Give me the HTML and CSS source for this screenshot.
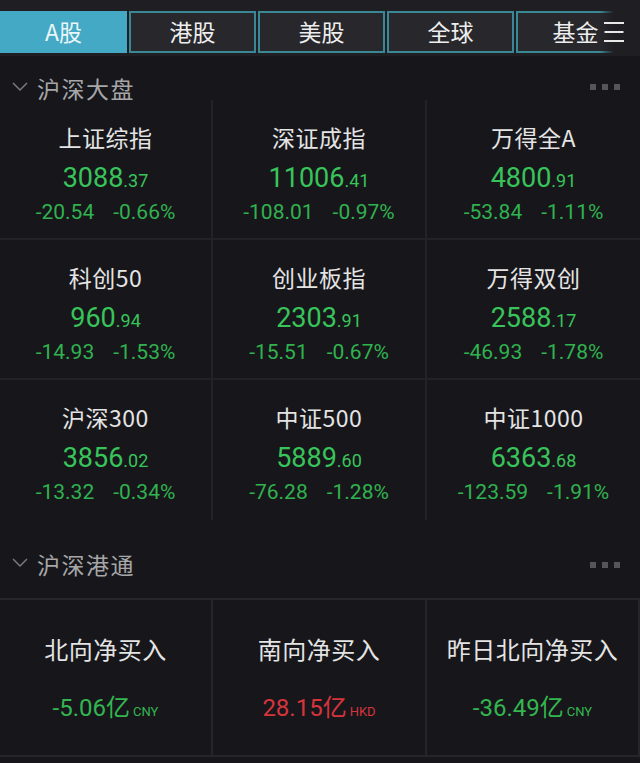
FILE: index.html
```html
<!DOCTYPE html>
<html lang="zh">
<head>
<meta charset="utf-8">
<link rel="stylesheet" href="styles.css">
</head>
<body>
<div class="topbar">
  <div class="tabs">
    <div class="tab active">A股</div>
    <div class="tab">港股</div>
    <div class="tab">美股</div>
    <div class="tab">全球</div>
    <div class="tab">基金</div>
  </div>
  <div class="fade">
    <svg class="menu" width="22" height="22" viewBox="0 0 22 22"><path d="M1 3h20M1.5 12h19M1 21h20" stroke="#e8e8e8" stroke-width="2" fill="none"/></svg>
  </div>
</div>

<div class="section-head">
  <svg class="chev" width="16" height="10" viewBox="0 0 16 10"><path d="M1 1l7 7 7-7" stroke="#7a7a7e" stroke-width="1.5" fill="none"/></svg>
  <span class="sec-title">沪深大盘</span>
  <span class="dots"><i></i><i></i><i></i></span>
</div>

<div class="grid">
  <div class="cell"><div class="name">上证综指</div><div class="num">3088<small>.37</small></div><div class="chg"><span>-20.54</span><span>-0.66%</span></div></div>
  <div class="cell"><div class="name">深证成指</div><div class="num">11006<small>.41</small></div><div class="chg"><span>-108.01</span><span>-0.97%</span></div></div>
  <div class="cell"><div class="name">万得全A</div><div class="num">4800<small>.91</small></div><div class="chg"><span>-53.84</span><span>-1.11%</span></div></div>
  <div class="cell"><div class="name">科创50</div><div class="num">960<small>.94</small></div><div class="chg"><span>-14.93</span><span>-1.53%</span></div></div>
  <div class="cell"><div class="name">创业板指</div><div class="num">2303<small>.91</small></div><div class="chg"><span>-15.51</span><span>-0.67%</span></div></div>
  <div class="cell"><div class="name">万得双创</div><div class="num">2588<small>.17</small></div><div class="chg"><span>-46.93</span><span>-1.78%</span></div></div>
  <div class="cell"><div class="name">沪深300</div><div class="num">3856<small>.02</small></div><div class="chg"><span>-13.32</span><span>-0.34%</span></div></div>
  <div class="cell"><div class="name">中证500</div><div class="num">5889<small>.60</small></div><div class="chg"><span>-76.28</span><span>-1.28%</span></div></div>
  <div class="cell"><div class="name">中证1000</div><div class="num">6363<small>.68</small></div><div class="chg"><span>-123.59</span><span>-1.91%</span></div></div>
</div>

<div class="section-head second">
  <svg class="chev" width="16" height="10" viewBox="0 0 16 10"><path d="M1 1l7 7 7-7" stroke="#7a7a7e" stroke-width="1.5" fill="none"/></svg>
  <span class="sec-title">沪深港通</span>
  <span class="dots"><i></i><i></i><i></i></span>
</div>

<div class="flow">
  <div class="fcell"><div class="name">北向净买入</div><div class="fval green">-5.06亿<small>CNY</small></div></div>
  <div class="fcell"><div class="name">南向净买入</div><div class="fval red">28.15亿<small>HKD</small></div></div>
  <div class="fcell"><div class="name">昨日北向净买入</div><div class="fval green">-36.49亿<small>CNY</small></div></div>
</div>
</body>
</html>
```

FILE: styles.css
```css
html, body {
  margin: 0;
  padding: 0;
}
body {
  width: 640px;
  height: 763px;
  overflow: hidden;
  background: #17171b;
  font-family: Roboto, "Noto Sans CJK SC", sans-serif;
  color: #e6e6e6;
}
.topbar {
  position: relative;
  height: 56px;
  background: #1f1f23;
  overflow: hidden;
}
.tabs {
  display: flex;
  gap: 2px;
  padding-top: 11px;
  width: 800px;
}
.tab {
  flex: 0 0 127px;
  box-sizing: border-box;
  height: 42px;
  border: 2px solid #3a8896;
  background: #28282c;
  color: #eeeeee;
  font-family: "Noto Sans CJK SC", sans-serif;
  font-size: 23px;
  line-height: 37px;
  text-align: center;
}
.tab.active {
  background: #44a9c4;
  border-color: #44a9c4;
  color: #eaf6fa;
}
.tab:last-child {
  text-indent: -8px;
}
.fade {
  position: absolute;
  right: 0;
  top: 0;
  width: 40px;
  height: 56px;
  background: linear-gradient(to right, rgba(31,31,35,0) 0%, #1f1f23 35%);
  padding: 20px 0 0 3px;
  box-sizing: border-box;
}
.menu {
  display: block;
}
.section-head {
  display: flex;
  align-items: center;
  height: 44px;
  padding: 20px 0 0 12px;
  box-sizing: border-box;
}
.section-head.second {
  height: 78px;
  padding-top: 30px;
  padding-bottom: 20px;
}
.chev {
  display: block;
  margin-right: 9px;
  margin-top: -2px;
}
.sec-title {
  font-family: "Noto Sans CJK SC", sans-serif;
  font-size: 23px;
  color: #a6a6a8;
  line-height: 24px;
  letter-spacing: 1.5px;
  flex: 1;
}
.dots {
  display: flex;
  gap: 6px;
  margin-right: 20px;
  margin-top: -2px;
}
.second .dots {
  margin-top: 2px;
}
.dots i {
  display: block;
  width: 6px;
  height: 6px;
  background: #55555a;
}
.grid {
  display: grid;
  grid-template-columns: 213px 214px 213px;
}
.cell {
  height: 140px;
  box-sizing: border-box;
  border-bottom: 2px solid #232327;
  border-right: 2px solid #232327;
  text-align: center;
  padding-top: 23px;
}
.cell:nth-child(3n) {
  border-right: none;
}
.cell:nth-child(n+7) {
  border-bottom: none;
}
.name {
  font-family: "Noto Sans CJK SC", sans-serif;
  font-size: 23px;
  line-height: 28px;
  color: #e4e4e4;
  letter-spacing: 0.5px;
}
.num {
  margin-top: 11px;
  font-size: 27px;
  line-height: 32px;
  color: #38c45a;
}
.num small {
  font-size: 18px;
}
.chg {
  margin-top: 2px;
  font-size: 21px;
  line-height: 26px;
  color: #30b24f;
  display: flex;
  justify-content: center;
  gap: 19px;
}
.flow {
  display: grid;
  grid-template-columns: 213px 214px 213px;
  border-top: 2px solid #26262a;
  border-bottom: 2px solid #26262a;
}
.fcell {
  height: 155px;
  box-sizing: border-box;
  border-right: 2px solid #26262a;
  text-align: center;
  padding-top: 34px;
}
.fcell .name {
  font-size: 24px;
  line-height: 30px;
}
.fval {
  margin-top: 29px;
  font-size: 24px;
  line-height: 30px;
}
.fval small {
  font-size: 13px;
  margin-left: 3px;
}
.green { color: #33b650; }
.red { color: #d6343c; }
```
